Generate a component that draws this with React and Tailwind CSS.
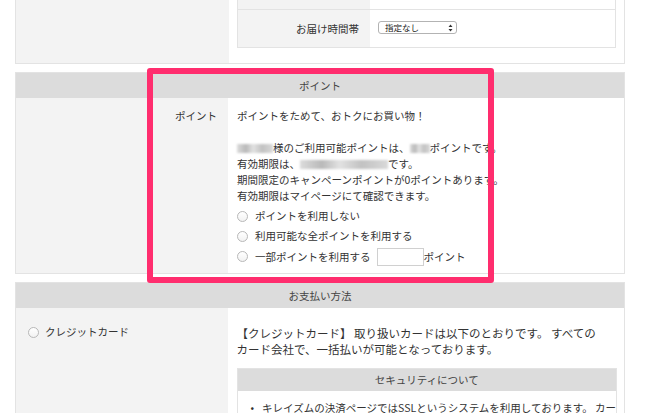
import React from 'react';

const font = { fontFamily: '"Noto Sans CJK JP", "Noto Sans", sans-serif' };

const Blur = ({ w }) => (
  <span
    className={`inline-block h-[9px] align-[-1px] blur-[1px] bg-[linear-gradient(90deg,#dcdcdc,#b9b9b9_25%,#e2e2e2_45%,#c2c2c2_70%,#d9d9d9)] ${w}`}
  />
);

const Radio = () => (
  <span className="inline-block w-[11px] h-[11px] rounded-full border border-[#b8b8b8] bg-[linear-gradient(#ffffff,#f2f2f2)] shrink-0" />
);

const SectionHeader = ({ children }) => (
  <div className="h-[25px] bg-[#dcdcdc] flex items-center justify-center text-[10.5px] text-[#444]">
    {children}
  </div>
);

export default function App() {
  return (
    <div className="relative w-[670px] h-[413px] overflow-hidden bg-white text-[#333]" style={font}>
      <div className="ml-[15px] w-[610px]">
        {/* お届け情報 (cut off at the top) */}
        <div className="flex border-x border-b border-[#e3e3e3]">
          <div className="w-[213px] bg-[#f3f3f3]" />
          <div className="flex-1 px-[8px] pb-[15px]">
            <div className="border-x border-b border-[#e3e3e3]">
              <div className="flex h-[9px]">
                <div className="w-[132px] bg-[#f3f3f3]" />
                <div className="flex-1" />
              </div>
              <div className="flex h-[38px] border-t border-[#e3e3e3]">
                <div className="w-[132px] bg-[#f3f3f3] flex items-center justify-end pr-[11px] text-[10.5px]">
                  お届け時間帯
                </div>
                <div className="flex-1 flex items-center pl-[8px]">
                  <div className="w-[79px] h-[13px] -mt-[2px] rounded-[3px] border border-[#b3b3b3] bg-white flex items-center justify-between pl-[6px] pr-[3px] text-[8.5px] leading-none text-[#222]">
                    <span>指定なし</span>
                    <svg width="5" height="8" viewBox="0 0 5 8">
                      <path d="M0.5 3 L2.5 0.5 L4.5 3 Z M0.5 5 L2.5 7.5 L4.5 5 Z" fill="#333" />
                    </svg>
                  </div>
                </div>
              </div>
            </div>
          </div>
        </div>

        {/* ポイント */}
        <div className="mt-[8px] border border-[#e3e3e3]">
          <SectionHeader>ポイント</SectionHeader>
          <div className="flex">
            <div className="w-[212px] bg-[#f3f3f3] pt-[10px] pr-[11px] text-right text-[10.5px] leading-[16px]">
              ポイント
            </div>
            <div className="flex-1 pl-[9px] pt-[10px] pb-[6px] text-[10.5px] leading-[16px] whitespace-nowrap">
              <p>ポイントをためて、おトクにお買い物！</p>
              <p className="h-[16px]" />
              <p>
                <Blur w="w-[36px]" />様のご利用可能ポイントは、<Blur w="w-[20px]" />ポイントです。
              </p>
              <p>
                有効期限は、<Blur w="w-[88px]" />です。
              </p>
              <p>期間限定のキャンペーンポイントが0ポイントあります。</p>
              <p>有効期限はマイページにて確認できます。</p>
              <div className="mt-[2px] flex items-center gap-[7px] h-[20px]">
                <Radio />
                <span>ポイントを利用しない</span>
              </div>
              <div className="flex items-center gap-[7px] h-[20px]">
                <Radio />
                <span>利用可能な全ポイントを利用する</span>
              </div>
              <div className="flex items-center gap-[7px] h-[21px]">
                <Radio />
                <span>一部ポイントを利用する</span>
                <span className="w-[47px] h-[18px] border border-[#d0d0d0] bg-white -ml-[1px]" />
                <span className="-ml-[7px]">ポイント</span>
              </div>
            </div>
          </div>
        </div>

        {/* お支払い方法 */}
        <div className="mt-[8px] border-x border-t border-[#e3e3e3]">
          <SectionHeader>お支払い方法</SectionHeader>
          <div className="flex h-[120px]">
            <div className="w-[212px] bg-[#f3f3f3] pt-[16px] pl-[12px] text-[10.5px] leading-[16px]">
              <div className="flex items-center gap-[6px]">
                <Radio />
                <span>クレジットカード</span>
              </div>
            </div>
            <div className="flex-1 pl-[9px] pr-[7px] pt-[17px]">
              <p className="text-[11.5px] leading-[16px] whitespace-nowrap">
                【クレジットカード】 取り扱いカードは以下のとおりです。 すべての
                <br />
                カード会社で、一括払いが可能となっております。
              </p>
              <div className="mt-[11px] border border-[#e3e3e3]">
                <div className="h-[22px] bg-[#dcdcdc] flex items-center justify-center text-[10.5px] text-[#444]">
                  セキュリティについて
                </div>
                <ul className="pt-[9px] pl-[13px] text-[10.5px] leading-[15px]">
                  <li className="flex gap-[8px]">
                    <span>•</span>
                    <span className="whitespace-nowrap">
                      キレイズムの決済ページではSSLというシステムを利用しております。 カー
                    </span>
                  </li>
                </ul>
              </div>
            </div>
          </div>
        </div>
      </div>

      {/* highlight annotation */}
      <div className="absolute left-[147px] top-[68px] w-[347px] h-[215px] border-[6px] border-[#ff2d6e] rounded-[3px]" />
    </div>
  );
}
